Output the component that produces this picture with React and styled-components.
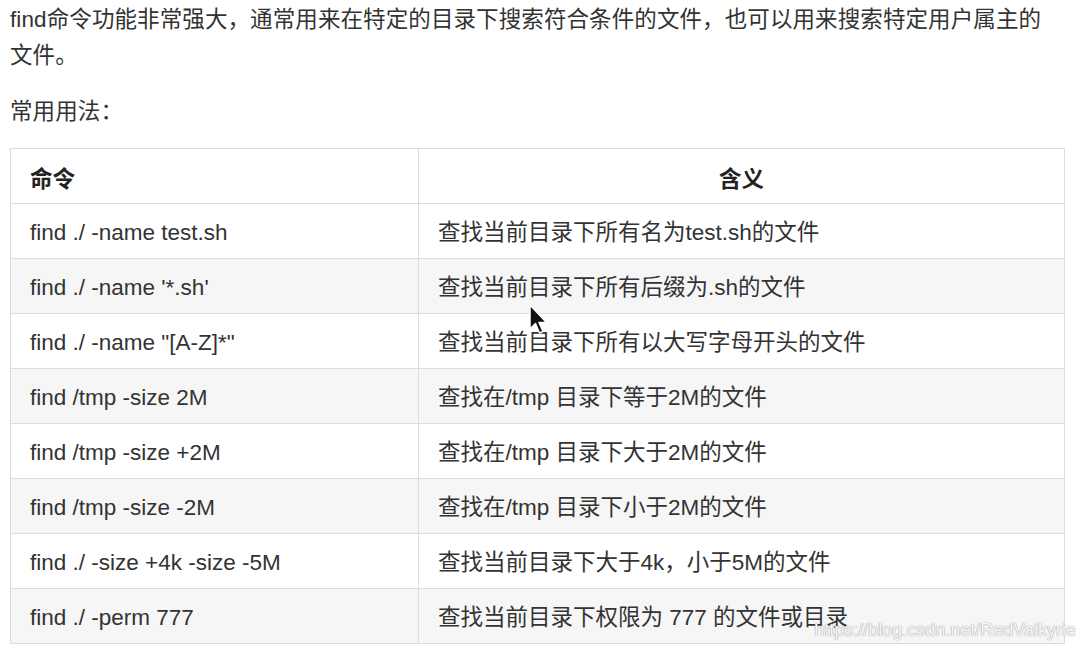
import React from "react";
import styled, { createGlobalStyle } from "styled-components";

const GlobalStyle = createGlobalStyle`
  html, body {
    margin: 0;
    padding: 0;
    background: #fff;
  }
  body {
    font-family: "Liberation Sans", "Noto Sans CJK SC", sans-serif;
    color: #333;
  }
`;

const Page = styled.div`
  position: relative;
  width: 1076px;
  height: 649px;
  overflow: hidden;
  padding: 2px 11px 0 10px;
  box-sizing: border-box;
`;

const Para = styled.p`
  width: 1046px;
  margin: 0 0 ${({ $gap }) => $gap}px;
  font-size: 22.5px;
  line-height: 36px;
  letter-spacing: 0.1px;
  color: #333;
`;

const Table = styled.table`
  width: 1055px;
  border-collapse: collapse;
  table-layout: fixed;
  font-size: 22.5px;
  color: #333;
`;

const Row = styled.tr`
  height: 55px;
  background: ${({ $striped }) => ($striped ? "#f6f6f6" : "#fff")};
`;

const Head = styled.th`
  border: 1px solid #dcdcdc;
  padding: 2px 19px 0;
  font-weight: bold;
  text-align: ${({ $align }) => $align || "left"};
  width: ${({ $w }) => ($w ? `${$w}px` : "auto")};
  color: #222;
`;

const Cell = styled.td`
  border: 1px solid #dcdcdc;
  padding: 3px 19px 0;
  line-height: 30px;
  white-space: nowrap;
`;

const Watermark = styled.span`
  position: absolute;
  right: 0;
  bottom: 8px;
  font-size: 18px;
  color: rgba(255, 255, 255, 0.95);
  text-shadow: 0 0 1px #9a9a9a, 0 0 1px #9a9a9a;
`;

const Cursor = styled.svg`
  position: absolute;
  left: 528px;
  top: 304px;
`;

const rows = [
  ["find ./ -name test.sh", "查找当前目录下所有名为test.sh的文件"],
  ["find ./ -name '*.sh'", "查找当前目录下所有后缀为.sh的文件"],
  ['find ./ -name "[A-Z]*"', "查找当前目录下所有以大写字母开头的文件"],
  ["find /tmp -size 2M", "查找在/tmp 目录下等于2M的文件"],
  ["find /tmp -size +2M", "查找在/tmp 目录下大于2M的文件"],
  ["find /tmp -size -2M", "查找在/tmp 目录下小于2M的文件"],
  ["find ./ -size +4k -size -5M", "查找当前目录下大于4k，小于5M的文件"],
  ["find ./ -perm 777", "查找当前目录下权限为 777 的文件或目录"],
];

export default function App() {
  return (
    <>
      <GlobalStyle />
      <Page>
        <Para $gap={20}>
          find命令功能非常强大，通常用来在特定的目录下搜索符合条件的文件，也可以用来搜索特定用户属主的文件。
        </Para>
        <Para $gap={18}>常用用法：</Para>
        <Table>
          <colgroup>
            <col style={{ width: "408px" }} />
            <col />
          </colgroup>
          <thead>
            <Row>
              <Head>命令</Head>
              <Head $align="center">含义</Head>
            </Row>
          </thead>
          <tbody>
            {rows.map(([cmd, desc], i) => (
              <Row key={cmd} $striped={i % 2 === 1}>
                <Cell>{cmd}</Cell>
                <Cell>{desc}</Cell>
              </Row>
            ))}
          </tbody>
        </Table>
        <Cursor width="22" height="32" viewBox="0 0 22 32">
          <path
            d="M2 1 L2 25 L7.5 19.5 L11.5 29 L15 27.5 L11 18.5 L18.5 18.5 Z"
            fill="#111"
            stroke="#fff"
            strokeWidth="1.5"
            strokeLinejoin="round"
          />
        </Cursor>
        <Watermark>https://blog.csdn.net/RedValkyrie</Watermark>
      </Page>
    </>
  );
}
